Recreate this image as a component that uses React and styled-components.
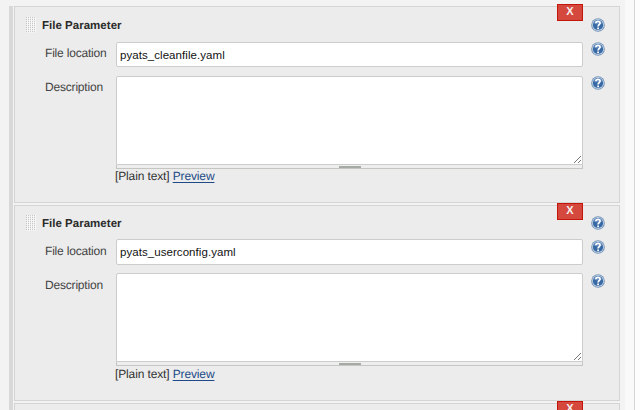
import React from 'react';
import styled, { createGlobalStyle } from 'styled-components';

const GlobalStyle = createGlobalStyle`
  * { box-sizing: border-box; }
  body {
    margin: 0;
    overflow: hidden;
    background: #fdfdfd;
    font: 12px/16px "Liberation Sans", Arial, sans-serif;
    letter-spacing: -0.19px;
    text-rendering: geometricPrecision;
    color: #333;
  }
`;

const Page = styled.div`
  display: flex;
  height: 410px;
  overflow: hidden;
  background: #f3f3f3;
`;

const DragRail = styled.div`
  flex: none;
  width: 4px;
  margin: 6px 0 0 9px;
  background: #d8d8d8;
`;

const Panels = styled.main`
  flex: none;
  display: flex;
  flex-direction: column;
  gap: 2px;
  width: 606px;
  margin-left: 1px;
  padding-top: 6px;
`;

const Gutter = styled.div`
  flex: none;
  width: 9px;
  margin-left: 5px;
  background: #f9f9f9;
`;

const Edge = styled.div`
  flex: 1;
  border-left: 1px solid #d5d5d5;
  background: #fdfdfd;
`;

const Panel = styled.section`
  position: relative;
  flex: none;
  height: ${(p) => p.$height}px;
  padding: 9px 0 0 11px;
  border: 1px solid #d4d4d4;
  background: #ececec;
`;

const DeleteButton = styled.button`
  position: absolute;
  top: -3px;
  right: 36px;
  width: 26px;
  height: 17px;
  padding: 0 0 2px;
  border: 1px solid #c4150b;
  background: #d4483e;
  color: #f8eeee;
  font: bold 11px/13px "Liberation Sans", Arial, sans-serif;
`;

const Row = styled.div`
  display: grid;
  grid-template-columns: 90px 467px 8px 14px;
  align-items: start;
  height: ${(p) => p.$height}px;
`;

const Heading = styled.div`
  grid-column: 1 / 3;
  display: flex;
  align-items: flex-start;
  padding-top: ${(p) => p.$offset}px;
`;

const Title = styled.b`
  margin-left: 6px;
  padding-top: 1px;
  font-size: 11.5px;
  letter-spacing: 0.02px;
  color: #2b2b2b;
  white-space: nowrap;
`;

const Label = styled.label`
  padding: 4px 0 0 19px;
  color: #444;
  white-space: nowrap;
`;

const TextInput = styled.input`
  width: 467px;
  height: ${(p) => p.$height}px;
  margin-top: ${(p) => p.$offset}px;
  padding: 0 3px 0;
  border: 1px solid #ccc;
  border-radius: 2px;
  outline: none;
  background: #fff;
  color: #111;
  font: 11.5px "Liberation Sans", Arial, sans-serif;
  letter-spacing: 0.06px;
`;

const Editor = styled.div`
  display: flex;
  flex-direction: column;
  padding-top: ${(p) => p.$offset}px;
`;

const TextFrame = styled.div`
  position: relative;
  height: 89px;
`;

const TextArea = styled.textarea`
  display: block;
  width: 467px;
  height: 89px;
  padding: 4px;
  border: 1px solid #ccc;
  border-radius: 2px 2px 0 0;
  outline: none;
  resize: none;
  background: #fff;
  font: inherit;
`;

const ResizeMark = styled.svg`
  position: absolute;
  right: 1px;
  bottom: 1px;
`;

const ResizeBar = styled.div`
  display: flex;
  justify-content: center;
  height: 4px;
  border: 1px solid #c5c5c2;
  border-top: 0;
  background: #eee;
`;

const ResizeHandle = styled.span`
  width: 22px;
  height: 2px;
  margin-top: 1px;
  background: #a5aaa5;
`;

const Format = styled.div`
  height: 16px;
  margin: ${(p) => -p.$lift}px 0 0 -1px;
  letter-spacing: -0.13px;
  white-space: nowrap;
  color: #333;
`;

const PreviewLink = styled.a`
  color: #204a87;
  text-decoration: underline;
  text-underline-offset: 2px;
`;

const HelpSlot = styled.div`
  grid-column: 4;
  height: 14px;
  margin-top: ${(p) => 1 + (p.$offset || 0)}px;
`;

const Svg = styled.svg`
  display: block;
`;

function HelpIcon() {
  return (
    <Svg width="14" height="14" viewBox="0 0 14 14" aria-label="Help">
      <circle cx="7" cy="7" r="6.8" fill="#7391b5" />
      <circle cx="7" cy="7" r="6" fill="#b9cde2" />
      <circle cx="7" cy="7" r="5.1" fill="#3969a5" />
      <path d="M2.3 5.2A5.2 5.2 0 0 1 11.7 5.2Q8 7.7 2.3 5.2Z" fill="#7198c7" opacity=".65" />
      <path d="M4.9 5.3C4.9 2.7 9.1 2.7 9.1 5.1C9.1 6.6 7.1 6.8 7.1 8.6" fill="none" stroke="#fff" strokeWidth="1.7" />
      <rect x="6.2" y="9.5" width="1.8" height="1.7" fill="#fff" />
    </Svg>
  );
}

function DragGrip() {
  const dots = [];
  for (let y = 0; y < 8; y += 1) {
    for (let x = 0; x < 5; x += 1) {
      dots.push(
        <React.Fragment key={`${x}-${y}`}>
          <rect x={x * 2} y={y * 2} width="1" height="1" fill="#c7c7c7" />
          <rect x={x * 2 + 1} y={y * 2} width="1" height="2" fill="#f8f8f8" />
        </React.Fragment>
      );
    }
  }
  return <Svg width="10" height="16" viewBox="0 0 10 16">{dots}</Svg>;
}

function FileParameter({ name, height, inset, inputHeight }) {
  return (
    <Panel $height={height}>
      <DeleteButton>X</DeleteButton>
      <Row $height={24 + inset}>
        <Heading $offset={inset}>
          <DragGrip />
          <Title>File Parameter</Title>
        </Heading>
        <HelpSlot $offset={inset}><HelpIcon /></HelpSlot>
      </Row>
      <Row $height={34}>
        <Label>File location</Label>
        <TextInput $height={inputHeight} $offset={inset} defaultValue={name} spellCheck={false} />
        <HelpSlot><HelpIcon /></HelpSlot>
      </Row>
      <Row $height={110}>
        <Label>Description</Label>
        <Editor $offset={inset}>
          <TextFrame>
            <TextArea />
            <ResizeMark width="9" height="9" viewBox="0 0 9 9">
              <path d="M1 8L8 1M5 8L8 5" stroke="#777" fill="none" />
            </ResizeMark>
          </TextFrame>
          <ResizeBar><ResizeHandle /></ResizeBar>
          <Format $lift={inset}>[Plain text] <PreviewLink>Preview</PreviewLink></Format>
        </Editor>
        <HelpSlot><HelpIcon /></HelpSlot>
      </Row>
    </Panel>
  );
}

export default function App() {
  return (
    <>
      <GlobalStyle />
      <Page>
        <DragRail />
        <Panels>
          <FileParameter name="pyats_cleanfile.yaml" height={197} inset={1} inputHeight={25} />
          <FileParameter name="pyats_userconfig.yaml" height={196} inset={0} inputHeight={26} />
          <Panel $height={20}><DeleteButton>X</DeleteButton></Panel>
        </Panels>
        <Gutter />
        <Edge />
      </Page>
    </>
  );
}
